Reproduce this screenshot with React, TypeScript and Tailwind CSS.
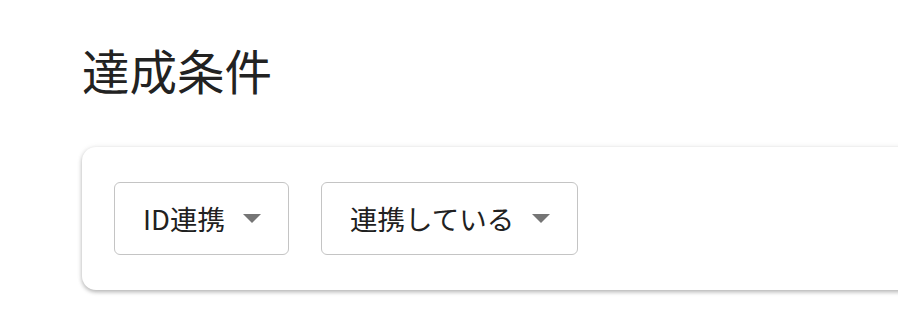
function Caret() {
  return (
    <svg width="18" height="9" viewBox="0 0 18 9" className="shrink-0">
      <path d="M0 0h18L9 9z" fill="#757575" />
    </svg>
  );
}

function SelectBox({ label }: { label: string }) {
  return (
    <button className="flex h-[73px] items-center gap-[18px] rounded-[6px] border border-[#c4c4c4] bg-white pl-[28px] pr-[27px] text-[27.5px] leading-none text-[#212121]">
      <span>{label}</span>
      <Caret />
    </button>
  );
}

export default function App() {
  return (
    <div
      className="h-[336px] w-[898px] overflow-hidden bg-white"
      style={{ fontFamily: '"Noto Sans CJK JP", "Noto Sans", sans-serif' }}
    >
      <div className="pl-[82px] pt-[42px]">
        <h1 className="text-[47.5px] leading-[56px] font-normal text-[#222]">達成条件</h1>

        {/* Condition card */}
        <div className="mt-[49px] w-[900px] rounded-[14px] bg-white px-[32px] py-[35px] shadow-[0_2px_4px_rgba(0,0,0,0.28),0_0_6px_rgba(0,0,0,0.06)]">
          <div className="flex gap-[32px]">
            <SelectBox label="ID連携" />
            <SelectBox label="連携している" />
          </div>
        </div>
      </div>
    </div>
  );
}
